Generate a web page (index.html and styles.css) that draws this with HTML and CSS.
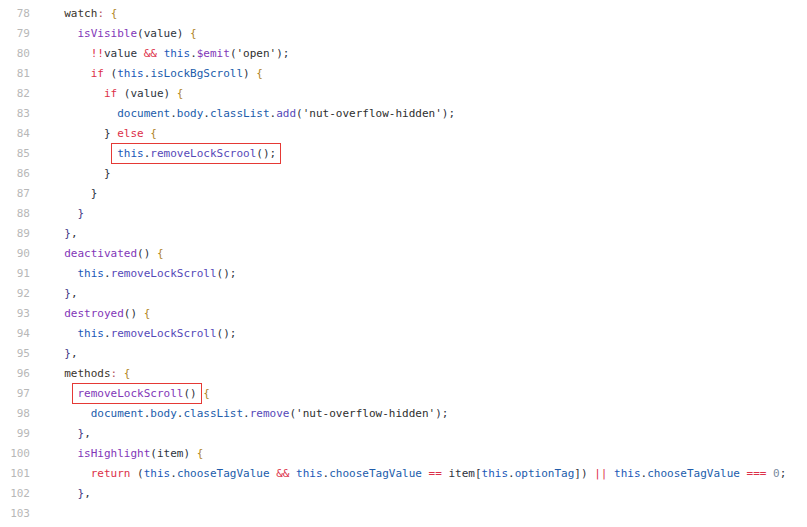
FILE: index.html
```html
<!DOCTYPE html>
<html>
<head>
<meta charset="utf-8">
<link rel="stylesheet" href="styles.css">
</head>
<body>
<div class="code">
<div class="row"><span class="ln">78</span><span class="src">  <span class="x">watch</span><span class="c">:</span> <span class="b">{</span></span></div>
<div class="row"><span class="ln">79</span><span class="src">    <span class="f">isVisible</span>(value) <span class="b">{</span></span></div>
<div class="row"><span class="ln">80</span><span class="src">      <span class="k">!!</span>value <span class="k">&amp;&amp;</span> <span class="t">this</span>.<span class="f">$emit</span>(<span class="s">'open'</span>);</span></div>
<div class="row"><span class="ln">81</span><span class="src">      <span class="k">if</span> (<span class="t">this</span>.<span class="p">isLockBgScroll</span>) <span class="b">{</span></span></div>
<div class="row"><span class="ln">82</span><span class="src">        <span class="k">if</span> (value) <span class="b">{</span></span></div>
<div class="row"><span class="ln">83</span><span class="src">          <span class="p">document</span>.<span class="p">body</span>.<span class="p">classList</span>.<span class="m">add</span>(<span class="s">'nut-overflow-hidden'</span>);</span></div>
<div class="row"><span class="ln">84</span><span class="src">        } <span class="k">else</span> <span class="b">{</span></span></div>
<div class="row"><span class="ln">85</span><span class="src">          <span class="mark"><span class="t">this</span>.<span class="m">removeLockScrool</span>();</span></span></div>
<div class="row"><span class="ln">86</span><span class="src">        }</span></div>
<div class="row"><span class="ln">87</span><span class="src">      }</span></div>
<div class="row"><span class="ln">88</span><span class="src">    <span class="pb">}</span></span></div>
<div class="row"><span class="ln">89</span><span class="src">  <span class="pb">}</span>,</span></div>
<div class="row"><span class="ln">90</span><span class="src">  <span class="f">deactivated</span>() <span class="b">{</span></span></div>
<div class="row"><span class="ln">91</span><span class="src">    <span class="t">this</span>.<span class="m">removeLockScroll</span>();</span></div>
<div class="row"><span class="ln">92</span><span class="src">  <span class="pb">}</span>,</span></div>
<div class="row"><span class="ln">93</span><span class="src">  <span class="f">destroyed</span>() <span class="b">{</span></span></div>
<div class="row"><span class="ln">94</span><span class="src">    <span class="t">this</span>.<span class="m">removeLockScroll</span>();</span></div>
<div class="row"><span class="ln">95</span><span class="src">  <span class="pb">}</span>,</span></div>
<div class="row"><span class="ln">96</span><span class="src">  <span class="x">methods</span><span class="c">:</span> <span class="b">{</span></span></div>
<div class="row"><span class="ln">97</span><span class="src">    <span class="mark"><span class="f">removeLockScroll</span>()</span> <span class="b">{</span></span></div>
<div class="row"><span class="ln">98</span><span class="src">      <span class="p">document</span>.<span class="p">body</span>.<span class="p">classList</span>.<span class="m">remove</span>(<span class="s">'nut-overflow-hidden'</span>);</span></div>
<div class="row"><span class="ln">99</span><span class="src">    <span class="pb">}</span>,</span></div>
<div class="row"><span class="ln">100</span><span class="src">    <span class="f">isHighlight</span>(item) <span class="b">{</span></span></div>
<div class="row"><span class="ln">101</span><span class="src">      <span class="k">return</span> (<span class="t">this</span>.<span class="p">chooseTagValue</span> <span class="k">&amp;&amp;</span> <span class="t">this</span>.<span class="p">chooseTagValue</span> <span class="k">==</span> item[<span class="t">this</span>.<span class="p">optionTag</span>]) <span class="k">||</span> <span class="t">this</span>.<span class="p">chooseTagValue</span> <span class="k">===</span> <span class="n">0</span>;</span></div>
<div class="row"><span class="ln">102</span><span class="src">    <span class="pb">}</span>,</span></div>
<div class="row"><span class="ln">103</span><span class="src"></span></div>
</div>
</body>
</html>
```
FILE: styles.css
```css
html, body {
  margin: 0;
  padding: 0;
  background: #ffffff;
}

.code {
  padding-top: 4px;
  font-family: "DejaVu Sans Mono", "Liberation Mono", monospace;
  font-size: 11px;
  color: #2e333d;
}

.row {
  display: flex;
  height: 20px;
  line-height: 20px;
}

.ln {
  width: 30px;
  flex: none;
  text-align: right;
  color: #b8b8b8;
}

.src {
  margin-left: 21px;
  white-space: pre;
}

.x { color: #3a342c; }
.c { color: #b5555e; }
.b { color: #b0841f; }
.pb { color: #463a88; }
.f { color: #8236b8; }
.m { color: #5548b8; }
.k { color: #dc3049; }
.t { color: #1a58b8; }
.p { color: #215cab; }
.s { color: #2e2e2e; }
.n { color: #7a8aa0; }

.mark {
  position: relative;
  display: inline-block;
  height: 20px;
}

.mark::after {
  content: "";
  position: absolute;
  top: -1px;
  bottom: 0;
  left: -6px;
  right: -5px;
  border: 1px solid #e53935;
}
```
